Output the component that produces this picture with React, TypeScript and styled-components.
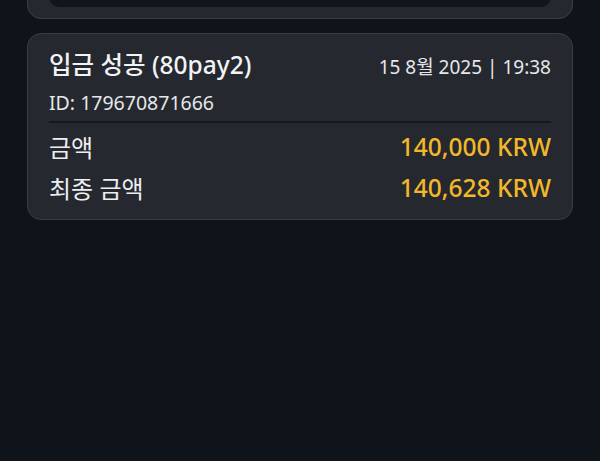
import React from "react";
import styled, { createGlobalStyle } from "styled-components";

const GlobalStyle = createGlobalStyle`
  html, body {
    margin: 0;
    padding: 0;
    background: #0f141a;
  }
  body {
    font-family: "Noto Sans", "Noto Sans CJK KR", sans-serif;
    color: #f2f3f5;
  }
`;

interface Deposit {
  title: string;
  date: string;
  time: string;
  id: string;
  amount: string;
  finalAmount: string;
}

const deposits: Deposit[] = [
  {
    title: "입금 성공 (80pay2)",
    date: "15 8월 2025",
    time: "19:38",
    id: "179670871666",
    amount: "140,000 KRW",
    finalAmount: "140,628 KRW",
  },
];

const App = () => {
  return (
    <>
      <GlobalStyle />
      <Page>
        <List>
          <Card>
            <Inner />
          </Card>
          {deposits.map((d) => (
            <Card key={d.id}>
              <Header>
                <Title>{d.title}</Title>
                <DateText>
                  {d.date} | {d.time}
                </DateText>
              </Header>
              <IdText>ID: {d.id}</IdText>
              <Divider />
              <Row>
                <Label>금액</Label>
                <Amount>{d.amount}</Amount>
              </Row>
              <Row>
                <Label>최종 금액</Label>
                <Amount>{d.finalAmount}</Amount>
              </Row>
            </Card>
          ))}
        </List>
      </Page>
    </>
  );
};

const Page = styled.div`
  width: 600px;
  height: 461px;
  overflow: hidden;
  background: #0f141a;
`;

// list is scrolled, the previous card only shows its bottom edge
const List = styled.div`
  display: flex;
  flex-direction: column;
  gap: 14px;
  padding: 0 27px 0 27px;
  margin-top: -56px;
`;

const Card = styled.div`
  background: #25282e;
  border: 1px solid #3a3d43;
  border-radius: 14px;
  padding: 14px 21px 11px 21px;
`;

const Inner = styled.div`
  height: 48px;
  background: #12161c;
  border-radius: 10px;
`;

const Header = styled.div`
  display: flex;
  justify-content: space-between;
  align-items: baseline;
`;

const Title = styled.div`
  font-size: 24.5px;
  font-weight: 500;
  line-height: 34px;
`;

const DateText = styled.div`
  font-size: 19px;
  line-height: 34px;
  color: #e6e7ea;
`;

const IdText = styled.div`
  font-size: 19.5px;
  line-height: 30px;
  margin-top: 4px;
  color: #e6e7ea;
`;

const Divider = styled.div`
  height: 2px;
  background: #15181d;
  margin: 3px 0 3px 0;
`;

const Row = styled.div`
  display: flex;
  justify-content: space-between;
  align-items: center;
  height: 41px;
`;

const Label = styled.div`
  font-size: 24px;
  color: #eceef0;
`;

const Amount = styled.div`
  font-size: 24.5px;
  font-weight: 500;
  color: #f3b82a;
`;

export default App;
